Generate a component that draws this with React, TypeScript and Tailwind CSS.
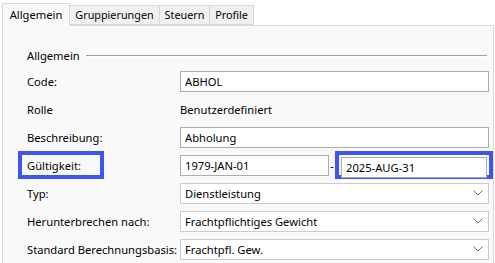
const tabs = [
  { label: "Allgemein", w: "w-[68px]" },
  { label: "Gruppierungen", w: "w-[90px]" },
  { label: "Steuern", w: "w-[50px]" },
  { label: "Profile", w: "w-[44px]" },
];

const Input = ({ value, className = "" }: { value: string; className?: string }) => (
  <div className={`h-[21px] shrink-0 border border-[#acacac] bg-white flex items-center px-[4px] ${className}`}>
    {value}
  </div>
);

const Select = ({ value }: { value: string }) => (
  <div className="h-[21px] w-[309px] shrink-0 border border-[#cccccc] bg-white flex items-center justify-between pl-[4px] pr-[5px]">
    <span>{value}</span>
    <svg width="10" height="6" viewBox="0 0 10 6" fill="none">
      <path d="M0.5 0.5 L5 5 L9.5 0.5" stroke="#707070" strokeWidth="1" />
    </svg>
  </div>
);

const Row = ({ label, children, highlight }: { label: string; children: React.ReactNode; highlight?: boolean }) => (
  <div className="flex items-center h-[28px]">
    <div className="w-[153px] shrink-0 flex items-center whitespace-nowrap">
      {highlight ? (
        <div className="ml-[-9px] border-[4px] border-[#3e55f2] h-[28px] w-[86px] flex items-center pl-[5px]">{label}</div>
      ) : (
        <span>{label}</span>
      )}
    </div>
    {children}
  </div>
);

export default function App() {
  return (
    <div
      className="w-[495px] h-[263px] bg-white text-[11.2px] text-black leading-none overflow-hidden whitespace-nowrap"
      style={{ fontFamily: '"Noto Sans", sans-serif' }}
    >
      <div className="flex items-end h-[25px] pl-[2px] text-[10.8px]">
        {tabs.map((t, i) =>
          i === 0 ? (
            <div key={t.label} className={`${t.w} h-[23px] bg-[#f9f9f9] border border-b-0 border-[#d9d9d9] flex items-center justify-center relative z-10 mb-[-1px] text-[11.2px]`}>
              {t.label}
            </div>
          ) : (
            <div key={t.label} className={`${t.w} h-[20px] bg-[#f0f0f0] border border-l-0 border-[#d9d9d9] flex items-center justify-center`}>
              {t.label}
            </div>
          )
        )}
      </div>
      <div className="ml-[2px] w-[492px] h-[239px] bg-[#f9f9f9] border border-[#dadada] pt-[24px] pl-[24px]">
        <div className="flex items-center gap-[6px] pr-[5px]">
          <span>Allgemein</span>
          <div className="flex-1 h-[2px] bg-[#a0a0a0] border-b border-white mr-[1px]" />
        </div>
        <div className="mt-[6px] flex flex-col">
          <Row label="Code:">
            <Input value="ABHOL" className="w-[309px]" />
          </Row>
          <Row label="Rolle">
            <span>Benutzerdefiniert</span>
          </Row>
          <Row label="Beschreibung:">
            <Input value="Abholung" className="w-[309px]" />
          </Row>
          <Row label="Gültigkeit:" highlight>
            <Input value="1979-JAN-01" className="w-[149px]" />
            <span className="w-[6px] shrink-0 text-center">-</span>
            <div className="border-[4px] border-[#3e55f2] p-[2px] w-[158px] shrink-0 h-[28px] flex">
              <Input value="2025-AUG-31" className="w-full h-[20px] shrink" />
            </div>
          </Row>
          <Row label="Typ:">
            <Select value="Dienstleistung" />
          </Row>
          <Row label="Herunterbrechen nach:">
            <Select value="Frachtpflichtiges Gewicht" />
          </Row>
          <Row label="Standard Berechnungsbasis:">
            <Select value="Frachtpfl. Gew." />
          </Row>
        </div>
      </div>
    </div>
  );
}
